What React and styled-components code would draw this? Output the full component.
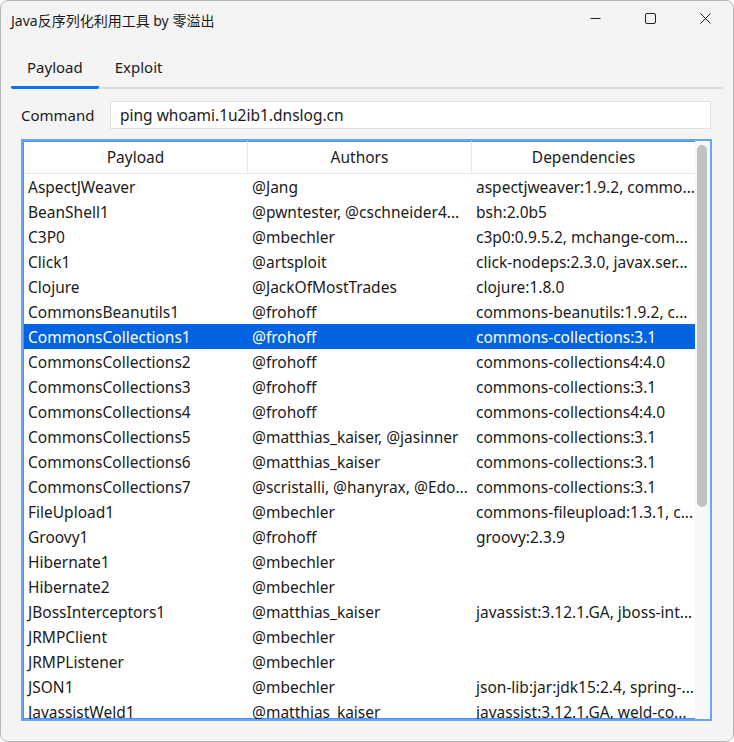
import React, { useState } from "react";
import styled, { createGlobalStyle } from "styled-components";

const rows = [
	["AspectJWeaver", "@Jang", "aspectjweaver:1.9.2, commo..."],
	["BeanShell1", "@pwntester, @cschneider4...", "bsh:2.0b5"],
	["C3P0", "@mbechler", "c3p0:0.9.5.2, mchange-com..."],
	["Click1", "@artsploit", "click-nodeps:2.3.0, javax.ser..."],
	["Clojure", "@JackOfMostTrades", "clojure:1.8.0"],
	["CommonsBeanutils1", "@frohoff", "commons-beanutils:1.9.2, c..."],
	["CommonsCollections1", "@frohoff", "commons-collections:3.1"],
	["CommonsCollections2", "@frohoff", "commons-collections4:4.0"],
	["CommonsCollections3", "@frohoff", "commons-collections:3.1"],
	["CommonsCollections4", "@frohoff", "commons-collections4:4.0"],
	["CommonsCollections5", "@matthias_kaiser, @jasinner", "commons-collections:3.1"],
	["CommonsCollections6", "@matthias_kaiser", "commons-collections:3.1"],
	["CommonsCollections7", "@scristalli, @hanyrax, @Edo...", "commons-collections:3.1"],
	["FileUpload1", "@mbechler", "commons-fileupload:1.3.1, c..."],
	["Groovy1", "@frohoff", "groovy:2.3.9"],
	["Hibernate1", "@mbechler", ""],
	["Hibernate2", "@mbechler", ""],
	["JBossInterceptors1", "@matthias_kaiser", "javassist:3.12.1.GA, jboss-int..."],
	["JRMPClient", "@mbechler", ""],
	["JRMPListener", "@mbechler", ""],
	["JSON1", "@mbechler", "json-lib:jar:jdk15:2.4, spring-..."],
	["JavassistWeld1", "@matthias_kaiser", "javassist:3.12.1.GA, weld-co..."],
];

export default function App() {
	const [tab, setTab] = useState("Payload");
	const [selected, setSelected] = useState(6);

	return (
		<>
			<Global />
			<Window>
				<TitleBar>
					<Title>Java反序列化利用工具 by 零溢出</Title>
					<Controls>
						<Ctrl>
							<svg width="11" height="11" viewBox="0 0 11 11">
								<path d="M0.5 5.5h10" stroke="#222" strokeWidth="1" />
							</svg>
						</Ctrl>
						<Ctrl>
							<svg width="11" height="11" viewBox="0 0 11 11">
								<rect x="0.5" y="0.5" width="10" height="10" rx="1.5" fill="none" stroke="#222" strokeWidth="1" />
							</svg>
						</Ctrl>
						<Ctrl>
							<svg width="11" height="11" viewBox="0 0 11 11">
								<path d="M0.5 0.5l10 10M10.5 0.5l-10 10" stroke="#222" strokeWidth="1" />
							</svg>
						</Ctrl>
					</Controls>
				</TitleBar>

				<TabBar>
					{["Payload", "Exploit"].map((t) => (
						<Tab key={t} $active={tab === t} onClick={() => setTab(t)}>
							{t}
						</Tab>
					))}
				</TabBar>

				<Body>
					<CommandRow>
						<Label>Command</Label>
						<Input defaultValue="ping whoami.1u2ib1.dnslog.cn" />
					</CommandRow>

					<Table>
						<TableMain>
							<HeadRow>
								<HeadCell>Payload</HeadCell>
								<HeadCell>Authors</HeadCell>
								<HeadCell $last>Dependencies</HeadCell>
							</HeadRow>
							<Rows>
								{rows.map((r, i) => (
									<Row key={r[0]} $sel={i === selected} onClick={() => setSelected(i)}>
										<Cell>{r[0]}</Cell>
										<Cell>{r[1]}</Cell>
										<Cell>{r[2]}</Cell>
									</Row>
								))}
							</Rows>
						</TableMain>
						<Scrollbar>
							<Thumb />
						</Scrollbar>
					</Table>
				</Body>
			</Window>
		</>
	);
}

const Global = createGlobalStyle`
	html, body {
		margin: 0;
		padding: 0;
		background: #ffffff;
	}
	* {
		box-sizing: border-box;
	}
	body {
		font-family: "Noto Sans", "Noto Sans CJK SC", sans-serif;
		color: #1b1b1b;
	}
`;

const Window = styled.div`
	width: 734px;
	height: 742px;
	border: 1px solid #b8b8b8;
	border-radius: 8px;
	background: #f4f4f4;
	display: flex;
	flex-direction: column;
	overflow: hidden;
`;

const TitleBar = styled.div`
	height: 37px;
	display: flex;
	align-items: center;
	justify-content: space-between;
	padding-left: 10px;
`;

const Title = styled.div`
	font-family: "Noto Sans", "Noto Sans CJK SC", sans-serif;
	font-size: 14px;
	color: #1a1a1a;
`;

const Controls = styled.div`
	display: flex;
	height: 100%;
`;

const Ctrl = styled.div`
	width: 55px;
	height: 100%;
	display: flex;
	align-items: center;
	justify-content: center;
	padding-bottom: 2px;
`;

const TabBar = styled.div`
	display: flex;
	margin: 14px 10px 0 10px;
	border-bottom: 2px solid #dedede;
	height: 37px;
`;

const Tab = styled.div`
	padding: 0 16px;
	height: 37px;
	display: flex;
	align-items: center;
	padding-bottom: 4px;
	font-size: 15px;
	color: #1b1b1b;
	margin-bottom: -2px;
	border-bottom: 3px solid ${(p) => (p.$active ? "#0a74f0" : "transparent")};
	border-radius: 2px;
	cursor: default;
`;

const Body = styled.div`
	flex: 1;
	display: flex;
	flex-direction: column;
	padding: 11px 21px 20px 20px;
	gap: 10px;
	min-height: 0;
`;

const CommandRow = styled.div`
	display: flex;
	align-items: center;
	gap: 14px;
	padding-top: 1px;
`;

const Label = styled.div`
	font-size: 15px;
	width: 75px;
`;

const Input = styled.input`
	flex: 1;
	height: 28px;
	border: 1px solid #e2e2e2;
	background: #fff;
	padding: 0 9px;
	font-family: "Noto Sans", sans-serif;
	font-size: 15.5px;
	color: #1b1b1b;
	outline: none;
	margin-right: 1px;
`;

const Table = styled.div`
	flex: 1;
	display: flex;
	border: 2px solid #6aa4f6;
	box-shadow: inset 0 0 0 1px #4d93f3;
	background: #fff;
	min-height: 0;
	overflow: hidden;
`;

const TableMain = styled.div`
	flex: 1;
	display: flex;
	flex-direction: column;
	min-width: 0;
	padding-left: 1px;
`;

const HeadRow = styled.div`
	display: grid;
	grid-template-columns: 224px 224px 223px;
	height: 33px;
	border-bottom: 1px solid #e6e6e6;
`;

const HeadCell = styled.div`
	display: flex;
	align-items: center;
	justify-content: center;
	font-size: 15.5px;
	border-right: ${(p) => (p.$last ? "none" : "1px solid #e6e6e6")};
`;

const Rows = styled.div`
	flex: 1;
	overflow: hidden;
`;

const Row = styled.div`
	display: grid;
	grid-template-columns: 224px 224px 223px;
	height: 25px;
	align-items: center;
	background: ${(p) => (p.$sel ? "#0063df" : "transparent")};
	color: ${(p) => (p.$sel ? "#fff" : "#1b1b1b")};
`;

const Cell = styled.div`
	padding-left: 4px;
	font-size: 15.5px;
	white-space: nowrap;
	overflow: hidden;
`;

const Scrollbar = styled.div`
	width: 15px;
	background: #f8f8f8;
	padding: 4px 3px 0 2px;
`;

const Thumb = styled.div`
	height: 362px;
	background: #c1c1c1;
	border-radius: 5px;
`;
